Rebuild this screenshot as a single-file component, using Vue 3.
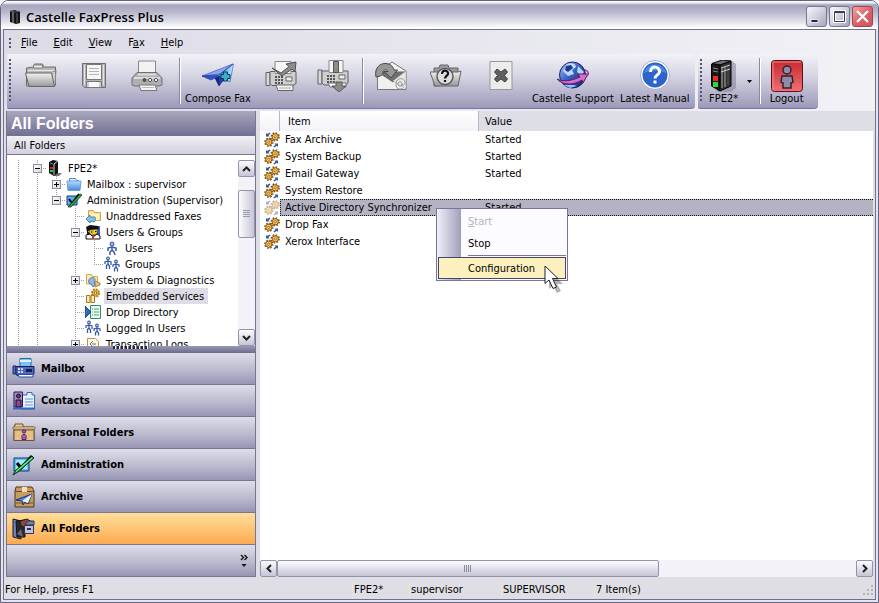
<script setup>
import { ref } from 'vue'

const menus = [
  { key: 'F', before: '', after: 'ile' },
  { key: 'E', before: '', after: 'dit' },
  { key: 'V', before: '', after: 'iew' },
  { key: 'a', before: 'F', after: 'x' },
  { key: 'H', before: '', after: 'elp' },
]

const toolGroups = [
  {
    size: 'wide',
    tools: [
      { icon: 't-open', name: 'Open' },
      { icon: 't-save', name: 'Save' },
      { icon: 't-print', name: 'Print' },
    ],
  },
  {
    size: 'narrow',
    tools: [
      { icon: 't-compose', label: 'Compose Fax' },
      { icon: 't-forward', name: 'Forward' },
      { icon: 't-receive', name: 'Receive' },
    ],
  },
  {
    size: 'wider',
    tools: [
      { icon: 't-mail', name: 'Send as mail' },
      { icon: 't-find', name: 'Find' },
      { icon: 't-delete', name: 'Delete' },
      { icon: 't-support', label: 'Castelle Support' },
      { icon: 't-manual', label: 'Latest Manual' },
    ],
  },
]

/* guides: v = vertical line, t = branch, l = last branch, n = nothing */
const tree = [
  { label: 'FPE2*', guides: 'vt', box: '-', icon: 's-server' },
  { label: 'Mailbox : supervisor', guides: 'vvt', box: '+', icon: 's-folder' },
  { label: 'Administration (Supervisor)', guides: 'vvl', box: '-', icon: 's-check' },
  { label: 'Unaddressed Faxes', guides: 'vvnt', icon: 's-unaddressed' },
  { label: 'Users & Groups', guides: 'vvnt', box: '-', icon: 's-face' },
  { label: 'Users', guides: 'vvnvt', icon: 's-user' },
  { label: 'Groups', guides: 'vvnvl', icon: 's-group' },
  { label: 'System & Diagnostics', guides: 'vvnt', box: '+', icon: 's-system' },
  { label: 'Embedded Services', guides: 'vvnt', icon: 's-services', active: true },
  { label: 'Drop Directory', guides: 'vvnt', icon: 's-drop' },
  { label: 'Logged In Users', guides: 'vvnt', icon: 's-group' },
  { label: 'Transaction Logs', guides: 'vvnt', box: '+', icon: 's-log' },
]

const navs = [
  { label: 'Mailbox', icon: 'n-mailbox' },
  { label: 'Contacts', icon: 'n-contacts' },
  { label: 'Personal Folders', icon: 'n-personal' },
  { label: 'Administration', icon: 'n-admin' },
  { label: 'Archive', icon: 'n-archive' },
  { label: 'All Folders', icon: 'n-all' },
]
const currentNav = ref('All Folders')

const services = [
  { item: 'Fax Archive', value: 'Started' },
  { item: 'System Backup', value: 'Started' },
  { item: 'Email Gateway', value: 'Started' },
  { item: 'System Restore', value: '' },
  { item: 'Active Directory Synchronizer', value: 'Started' },
  { item: 'Drop Fax', value: '' },
  { item: 'Xerox Interface', value: '' },
]
const currentService = ref('Active Directory Synchronizer')
</script>

<template>
  <div class="window">
    <svg class="sprites" width="0" height="0" aria-hidden="true">
      <defs>
        <linearGradient id="g-gray" x1="0" y1="0" x2="0" y2="1">
          <stop offset="0" stop-color="#f4f4f4" /><stop offset="1" stop-color="#989898" />
        </linearGradient>
        <linearGradient id="g-globe" x1="0" y1="0" x2="1" y2="1">
          <stop offset="0" stop-color="#a8d4ff" /><stop offset=".45" stop-color="#3a60c8" /><stop offset="1" stop-color="#101c60" />
        </linearGradient>
        <linearGradient id="g-red" x1="0" y1="0" x2="0" y2="1">
          <stop offset="0" stop-color="#c82830" /><stop offset="1" stop-color="#f07070" />
        </linearGradient>
        <linearGradient id="g-plane" x1="0" y1="0" x2="1" y2="0">
          <stop offset="0" stop-color="#3878e0" /><stop offset="1" stop-color="#c0f0ff" />
        </linearGradient>
        <linearGradient id="g-blue" x1="0" y1="0" x2="0" y2="1">
          <stop offset="0" stop-color="#b4dcff" /><stop offset="1" stop-color="#4888d8" />
        </linearGradient>
      </defs>

      <symbol id="t-open" viewBox="0 0 32 32">
        <path d="M1.500 26V8l7-1 1-3h8l1 3h12v18z" fill="#b8b8b8" stroke="#6c6c6c" />
        <path d="M8.500 8V5h9v3z" fill="#eee" stroke="#808080" />
        <path d="M3 10.500h27M29 12v12" stroke="#e8e8e8" />
        <path d="M0.500 13h26l3 13.500H4z" fill="url(#g-gray)" stroke="#666" />
        <path d="M28 12l3-2-1 14" fill="none" stroke="#888" />
      </symbol>
      <symbol id="t-save" viewBox="0 0 32 32">
        <path d="M4.500 3.500h23v24h-21l-2-2z" fill="#b4b4b4" stroke="#6e6e6e" />
        <path d="M6.500 5v20M25.500 5v20" stroke="#e4e4e4" />
        <path d="M8.500 4.500h15v15h-15z" fill="#f6f6f6" stroke="#777" />
        <path d="M11 8.500h10M11 11.500h10M11 14.500h10" stroke="#b4b4b4" />
        <path d="M8.500 21.500h15v6h-15z" fill="#d0d0d0" stroke="#777" /><path d="M11 22h10v5H11z" fill="#f8f8f8" />
      </symbol>
      <symbol id="t-print" viewBox="0 0 32 32">
        <path d="M7.500 1h17v15h-17z" fill="#f2f2f2" stroke="#888" />
        <path d="M6 12.500h20l5 5.500v7l-3 1H4l-3-1v-7z" fill="#b0b0b0" stroke="#707070" />
        <path d="M7 14.500h18M3 18h26" stroke="#dcdcdc" stroke-width="2" />
        <circle cx="13.500" cy="20" r="2" fill="#505050" /><circle cx="19" cy="20" r="1.700" fill="#eee" stroke="#555" /><circle cx="25" cy="20" r="1.700" fill="#eee" stroke="#555" />
        <path d="M8 25h16l2 5.500H10z" fill="#f4f4f4" stroke="#777" />
        <path d="M11 27.500h12" stroke="#bbb" />
      </symbol>
      <symbol id="t-compose" viewBox="0 0 32 32">
        <path d="M0 16L31 4 18 14z" fill="#88a8f4" stroke="#2848b0" stroke-width=".6" />
        <path d="M0 16l17-1L31 4 17 26l-4-8-4 2z" fill="#2c50d8" stroke="#203080" stroke-width=".6" />
        <path d="M31.500 4L28 22l-12-6z" fill="url(#g-plane)" stroke="#3058b0" stroke-width=".6" />
        <path d="M13 18l4-2v10z" fill="#182870" /><path d="M17 16l6 3-6 7z" fill="#203cb0" />
        <path d="M21.500 12h4v2.500H28v4h-2.500V21h-4v-2.500H19v-4h2.500z" fill="#38b0c8" stroke="#083858" />
      </symbol>
      <symbol id="t-forward" viewBox="0 0 32 32">
        <path d="M1 12.500h4v13H1z" fill="#d8d8d8" stroke="#606060" />
        <path d="M5 11.500h26v12l-3 2H7l-2-2z" fill="#cecece" stroke="#606060" />
        <path d="M10 1.500h16v12H10z" fill="#f6f6f6" stroke="#888" />
        <path d="M7 8l9 5 8-6.500-3-2.500 10-2-1 10-3-3-10 7z" fill="#8c8c8c" stroke="#505050" />
        <path d="M10 17h8M10 20h8M10 23h8" stroke="#555" stroke-width="2" stroke-dasharray="2 1" />
        <path d="M21 17h6v4h-6z" fill="#eee" stroke="#666" />
        <path d="M11 25h17v5.500H13z" fill="#f5f5f5" stroke="#666" /><path d="M14 28h12" stroke="#aaa" />
      </symbol>
      <symbol id="t-receive" viewBox="0 0 32 32">
        <path d="M1 10h4v14H1z" fill="#d8d8d8" stroke="#606060" />
        <path d="M5 11h26v12l-3 2H7l-2-2z" fill="#cecece" stroke="#606060" />
        <path d="M12 .500h14v12H12z" fill="#f6f6f6" stroke="#888" />
        <path d="M16.500 1.500h5v11h-5z" fill="#8c8c8c" stroke="#555" />
        <path d="M10 16h9M10 19h9M10 22h9" stroke="#555" stroke-width="2" stroke-dasharray="2 1" />
        <path d="M22 15h6v4h-6z" fill="#eee" stroke="#666" />
        <path d="M11 23h18v4H13z" fill="#f5f5f5" stroke="#777" />
        <path d="M19 22h6v4h4l-7 6-7-6h4z" fill="#8c8c8c" stroke="#555" />
      </symbol>
      <symbol id="t-mail" viewBox="0 0 32 32">
        <path d="M2.500 12L17 2l14 9v18.500H2.500z" fill="#f0f0f0" stroke="#777" />
        <path d="M3 12h28L18 22z" fill="#707070" stroke="#666" />
        <path d="M18 21L31 11v18z" fill="#e8e8e8" stroke="#aaa" stroke-width=".6" />
        <path d="M1 17C-1 8 5 3 11 3.500c5 .5 7 3 8 6.500h3.500L16 18l-7-6.500h4c-1.500-2.500-5-2-5 1 0 2-2 4-7 4.500z" fill="#979797" stroke="#484848" />
        <path d="M27 24c0 3-4 3-4 0s4-3 4 0 3 1 3-1c0-6-9-6-9 1s6 5 7 4" fill="none" stroke="#909090" />
      </symbol>
      <symbol id="t-find" viewBox="0 0 32 32">
        <path d="M4 26V8h5l1-3h8l1 3h9v17z" fill="#9a9a9a" stroke="#666" />
        <path d="M0 12h28l3-1-3 15H5z" fill="url(#g-gray)" stroke="#666" />
        <circle cx="15" cy="16.500" r="8" fill="#dedede" stroke="#5c5c5c" stroke-width="1.500" />
        <path d="M12 14c0-5 6.500-4 6 0-.5 2-3 2-3 4.500M15 20v2" fill="none" stroke="#111" stroke-width="2.200" />
      </symbol>
      <symbol id="t-delete" viewBox="0 0 32 32">
        <path d="M5 1.500h22v28H5z" fill="#ececec" stroke="#999" />
        <path d="M12 9l4 3 4-3 2.500 3-3 3.500 3 3.500L20 22l-4-3-4 3-2.500-3 3-3.500-3-3.500z" fill="#606060" stroke="#444" stroke-linejoin="round" />
      </symbol>
      <symbol id="t-support" viewBox="0 0 32 32">
        <circle cx="15.500" cy="15" r="13" fill="url(#g-globe)" stroke="#182460" />
        <path d="M10 4c5-2 9 0 9 3l-4 3 2 4-6 2-5-5zM21 6l6 6-3 4-4-4z" fill="#c4e4ff" opacity=".9" />
        <path d="M9 6l5-1 2 3-5 4-3-2z" fill="#203490" />
        <path d="M0 19c6 3 14 2 23-2l-2-3 10 0-5 9-1-3c-9 6-20 5-25-1z" fill="#d070d0" stroke="#601860" />
        <path d="M28 10c4 1 4 4 2 6" fill="none" stroke="#a03ca0" stroke-width="1.500" />
        <path d="M7 25l6 3 7-2-3-1z" fill="#90c0ff" />
      </symbol>
      <symbol id="t-manual" viewBox="0 0 32 32">
        <circle cx="16" cy="15" r="14.500" fill="#fff" stroke="#a8b0d0" />
        <circle cx="16" cy="15" r="12.500" fill="#2c64cc" /><path d="M4.500 13a12 12 0 0 1 23 0c-8-3-15-3-23 0z" fill="#4c88e0" />
        <path d="M11.500 12c0-7 9.500-6 9 0-.5 3-4.500 3-4.500 6.500M16 20.500v3" fill="none" stroke="#fff" stroke-width="3" />
      </symbol>
      <symbol id="t-server" viewBox="0 0 32 32">
        <path d="M7 3l17-2 4 3v24l-5 4H9z" fill="#88889a" opacity=".6" />
        <path d="M4 3.500L14 0l9 1-10 4z" fill="#707070" stroke="#111" />
        <path d="M3.500 4l8.500 1v26l-8.500-5z" fill="#181818" stroke="#000" />
        <path d="M12 5l11-4v25l-11 5z" fill="#303030" stroke="#000" />
        <path d="M14 8v20M17 7v20" stroke="#a8a8a8" /><path d="M20 5v20" stroke="#585858" /><path d="M13 8l9-3M13 12l9-3" stroke="#d0d0d0" />
        <path d="M5 8l5 1M5 11l5 1" stroke="#888" />
        <path d="M5 16h5v5H5z" fill="#f02820" /><path d="M5 22h5v5H5z" fill="#20e030" />
      </symbol>
      <symbol id="t-logout" viewBox="0 0 32 32">
        <rect x=".5" y=".5" width="31" height="31" rx="3" fill="url(#g-red)" stroke="#601018" />
        <path d="M2 30V2h28" fill="none" stroke="#f08888" />
        <circle cx="16" cy="10" r="4" fill="#8c8ca4" stroke="#30203a" stroke-width="1.500" />
        <path d="M11 16h10l1 6-2 1v5h-8v-5l-2-1z" fill="#8c8ca4" stroke="#30203a" stroke-width="1.500" />
      </symbol>

      <symbol id="s-server" viewBox="0 0 16 16">
        <path d="M9 13h6l-3 3H6z" fill="#777" /><path d="M2 2l4-2 5 1v12l-4 3-5-3z" fill="#111" />
        <path d="M7 4v11M7 4l4-3" stroke="#ccc" /><path d="M3 3l3 1" stroke="#888" />
        <path d="M3 7h3v2H3z" fill="#e02020" /><path d="M3 10h3v2H3z" fill="#20d040" />
      </symbol>
      <symbol id="s-folder" viewBox="0 0 16 16">
        <path d="M3.500 6V2.500h6l1 2h2V6" fill="#e0f0ff" stroke="#5088c8" />
        <path d="M1 5h14l-1 9.500H2z" fill="url(#g-blue)" stroke="#6ca0e0" />
      </symbol>
      <symbol id="s-check" viewBox="0 0 16 16">
        <path d="M1 4h10v9H1z" fill="#60b0f0" stroke="#103870" /><path d="M3 7l3 4 7-9" fill="none" stroke="#000" stroke-width="2" />
        <path d="M2 15L14 2l2 1L5 15z" fill="#28a848" stroke="#083818" stroke-width=".8" />
      </symbol>
      <symbol id="s-unaddressed" viewBox="0 0 16 16">
        <path d="M3.500 12V2.500h5l1 2h6v8z" fill="#ffe49c" stroke="#d0a040" /><path d="M4 6h11l-1 6H5z" fill="#fff0c0" />
        <path d="M1 11l4-4v2h5c1 2 0 4-1 5l-4-1v2z" fill="#88c0e0" stroke="#4888b0" />
      </symbol>
      <symbol id="s-face" viewBox="0 0 16 16">
        <path d="M5 2h10v13H5z" fill="#3060d8" /><path d="M1 3l4-2 8 1 1 3-9 1-3 2z" fill="#101010" />
        <path d="M4 6l8-1 1 3-2 3-6 0z" fill="#f4c820" stroke="#111" stroke-width=".6" />
        <path d="M1 15V11l4-1 3 3 4-3 3 2v3z" fill="#fff" stroke="#111" /><path d="M7 12h2v3H7z" fill="#e03020" /><path d="M6 8h1.500M10 7.500h1.500" stroke="#000" />
        <path d="M2 6l3 4-3 1z" fill="#111" />
      </symbol>
      <symbol id="s-user" viewBox="0 0 16 16">
        <circle cx="8" cy="4" r="2" fill="#a0c0f8" stroke="#304898" />
        <path d="M8 7v4M4 11V8l4-1 4 1v3M6 15v-3l2-2 2 2 1 3" fill="none" stroke="#3858a8" stroke-width="1.500" />
      </symbol>
      <symbol id="s-group" viewBox="0 0 16 16">
        <circle cx="4" cy="2.500" r="1.500" fill="#a0c0f8" stroke="#304898" />
        <path d="M4 5v4M1 8V6l3-1 3 1v3M2.500 13V9.500L4 8l1.500 2v3" fill="none" stroke="#3858a8" stroke-width="1.300" />
        <circle cx="12" cy="5.500" r="1.500" fill="#a0c0f8" stroke="#304898" />
        <path d="M12 8v4M9 11V9l3-1 3 1v2M10.500 15.500v-3L12 11l1.500 2v2.500" fill="none" stroke="#3858a8" stroke-width="1.300" />
      </symbol>
      <symbol id="s-system" viewBox="0 0 16 16">
        <path d="M1.500 12V2.500h5l1 2h5v8z" fill="#ffe8b0" stroke="#d0a858" />
        <path d="M10 9l5 2v2l-5 2z" fill="#f0c068" stroke="#b08030" />
        <path d="M6 6c4-2 5 2 3 4l1 3-2 2-2-3-2-1c-1-3 0-4 2-5z" fill="#90b8e0" stroke="#5080b0" />
      </symbol>
      <symbol id="s-services" viewBox="0 0 16 16">
        <circle cx="10.500" cy="5" r="3.600" fill="#f0c040" stroke="#a87018" stroke-width="1.800" stroke-dasharray="1.800 1" /><circle cx="10.500" cy="5" r="1.300" fill="#fff" stroke="#905c10" />
        <path d="M1.500 7.500h3.500v7H1.500zM6 7.500h3.500v7H6z" fill="#ffeaa8" stroke="#a07828" />
      </symbol>
      <symbol id="s-drop" viewBox="0 0 16 16">
        <path d="M5.500 1.500h10v13h-10z" fill="#e8fff0" stroke="#388878" /><path d="M7 5h1M9 5h5M7 8h1M9 8h5M7 11h1M9 11h5" stroke="#50a070" />
        <path d="M0 2l6 6-6 6z" fill="#2c70b8" stroke="#184878" />
      </symbol>
      <symbol id="s-log" viewBox="0 0 16 16">
        <path d="M2.500 2.500h8l3 3v10h-11z" fill="#fff8e0" stroke="#b89850" /><path d="M8 5l-3 3 3 3M7 8h4M7 12h4" fill="none" stroke="#5878a8" />
      </symbol>

      <symbol id="s-gears" viewBox="0 0 16 16">
        <g stroke="#8c5410">
          <circle cx="11.200" cy="4.800" r="3.900" fill="none" stroke-width="1.600" stroke-dasharray="1.600 1.460" />
          <circle cx="11.200" cy="4.800" r="3.100" fill="#f8cc60" /><circle cx="11.200" cy="4.800" r="1.100" fill="#fff" stroke-width=".8" />
          <circle cx="4.800" cy="10.200" r="3.900" fill="none" stroke-width="1.600" stroke-dasharray="1.600 1.460" />
          <circle cx="4.800" cy="10.200" r="3.100" fill="#f8cc60" /><circle cx="4.800" cy="10.200" r="1.100" fill="#fff" stroke-width=".8" />
        </g>
        <path d="M2 1v3.500h3.500L4.500 3.300 6.500 1.500 5.500.5 3.200 2zM14 15v-3.500h-3.500l1 1.200-2 1.800 1 1 2.300-1.700z" fill="#2c5c98" />
      </symbol>

      <symbol id="n-mailbox" viewBox="0 0 24 24">
        <path d="M8 1.500h11v9H8z" fill="#80c4f0" stroke="#2868a0" /><path d="M8 4h11" stroke="#d8f4ff" stroke-width="2" />
        <path d="M1 9h3v8H1z" fill="#5070c0" stroke="#182870" /><path d="M4 9.500h18v7l-2 2H5l-1-2z" fill="#5068b8" stroke="#141c60" />
        <path d="M6 12h6M6 15h6" stroke="#c8d8ff" stroke-width="2" stroke-dasharray="2 1" /><path d="M14 12h6v3h-6z" fill="#141c58" />
        <path d="M6 17.500h15v2.500H7z" fill="#f4f8ff" stroke="#3048a0" />
      </symbol>
      <symbol id="n-contacts" viewBox="0 0 24 24">
        <path d="M9 6h6V3.500h5V6h2.500v14H9z" fill="#e8f2ff" stroke="#3868c0" /><path d="M13 10h8M13 13h8M13 16h8" stroke="#6890d0" />
        <path d="M2 3h8.500v15H2z" fill="#a890b8" stroke="#281c58" /><circle cx="6.500" cy="7" r="2" fill="#703878" stroke="#180c30" />
        <path d="M4 18v-7h5v7z" fill="#8c4890" stroke="#180c30" /><path d="M1 18.500h22v2H1z" fill="#3868c0" />
      </symbol>
      <symbol id="n-personal" viewBox="0 0 24 24">
        <path d="M2 19.500V5h1V3h8v3h11v13.500z" fill="#f0d090" stroke="#70503c" /><path d="M1 6h22v2H1z" fill="#f8e4b8" stroke="#805838" stroke-width=".8" />
        <path d="M2 9h20v10.500H2z" fill="#e4c088" stroke="#70503c" />
        <circle cx="12" cy="10.500" r="1.700" fill="#a860b8" stroke="#502858" /><path d="M10 18.500v-4l1-1h2l1 1v4z" fill="#a860b8" stroke="#502858" />
      </symbol>
      <symbol id="n-admin" viewBox="0 0 24 24">
        <path d="M2 5h15v13H2z" fill="#60c0f0" stroke="#103870" /><path d="M4 7h11v9H4z" fill="#a8e4ff" />
        <path d="M5 10l4 5 11-12" fill="none" stroke="#000" stroke-width="3" />
        <path d="M1 22l2-4L20 3l2 2L6 19z" fill="#28b050" stroke="#083818" /><path d="M4 18.500L20 5" stroke="#90f0a0" />
      </symbol>
      <symbol id="n-archive" viewBox="0 0 24 24">
        <path d="M4 2h16l2 4v16H3V6z" fill="#c89c60" stroke="#4c3418" /><path d="M3 6.500h19" stroke="#6c4c24" /><path d="M10 2h5v5h-5z" fill="#f4e0b0" />
        <path d="M4 18h17" stroke="#a07840" stroke-width="2" />
        <path d="M4 15l16-6-4 10-3-2-2 3-1-4z" fill="#5888e0" stroke="#183070" /><path d="M10 16l10-7-4 9z" fill="#e8f4ff" />
      </symbol>
      <symbol id="n-all" viewBox="0 0 24 24">
        <path d="M1 2l8 2v18l-8-2z" fill="#7080b0" stroke="#181828" /><path d="M4 4l9-1v17H5z" fill="#282830" stroke="#101018" />
        <path d="M8 4l7-2 5 3-4 6-7-2z" fill="#884838" stroke="#301810" /><path d="M13 8l3-4h6v4z" fill="#7080a8" stroke="#303050" />
        <path d="M12.500 8.500h9v8h-9z" fill="#c0c4e0" stroke="#303058" /><path d="M15 12h4" stroke="#303058" stroke-width="2" /><path d="M5 17l4-5 2 8z" fill="#686868" />
      </symbol>
    </svg>

    <header class="titlebar">
      <svg class="app-icon" viewBox="0 0 12 16" aria-hidden="true">
        <path d="M1 2l5-1 5 2v11l-4 1-6-2z" fill="#141414" /><path d="M4 3v11" stroke="#b0b0b0" /><path d="M8 4v10" stroke="#666" /><path d="M1 2l5 1 5-1" stroke="#555" fill="none" />
      </svg>
      <h1>Castelle FaxPress Plus</h1>
      <div class="caption-buttons">
        <button type="button" aria-label="Minimize"><svg viewBox="0 0 19 19"><path d="M4 12.500h7v3H4z" fill="#26263c" stroke="#fff" stroke-width=".8" /></svg></button>
        <button type="button" aria-label="Maximize"><svg viewBox="0 0 19 19"><path d="M4.500 4.500h10v10h-10z" fill="none" stroke="#fff" stroke-width="3" /><path d="M4.500 4.500h10v10h-10zM4 5.500h11" fill="none" stroke="#3a3a54" /></svg></button>
        <button type="button" class="close" aria-label="Close"><svg viewBox="0 0 19 19"><path d="M4 4l11 11M15 4L4 15" stroke="#fff" stroke-width="2.400" /></svg></button>
      </div>
    </header>

    <div class="client">
      <nav class="menubar" aria-label="Menu">
        <span class="grip short"></span>
        <button v-for="m in menus" :key="m.key" type="button">{{ m.before }}<u>{{ m.key }}</u>{{ m.after }}</button>
      </nav>

      <div class="toolbars">
        <div class="toolbar" role="toolbar" aria-label="Standard">
          <span class="grip"></span>
          <div v-for="g in toolGroups" :key="g.size" class="tool-group" :class="g.size">
            <button v-for="t in g.tools" :key="t.icon" type="button" class="tool" :aria-label="t.label || t.name">
              <svg><use :href="'#' + t.icon" /></svg>
              <span>{{ t.label }}</span>
            </button>
          </div>
        </div>
        <div class="toolbar" role="toolbar" aria-label="Server">
          <span class="grip"></span>
          <div class="tool-group server">
            <button type="button" class="tool"><svg><use href="#t-server" /></svg><span>FPE2*</span></button>
            <button type="button" class="drop" aria-label="Choose server"><svg viewBox="0 0 5 3"><path d="M0 0h5L2.500 3z" /></svg></button>
          </div>
          <div class="tool-group narrow">
            <button type="button" class="tool"><svg><use href="#t-logout" /></svg><span>Logout</span></button>
          </div>
        </div>
      </div>

      <div class="workspace">
        <aside class="sidebar">
          <h2>All Folders</h2>
          <h3>All Folders</h3>
          <div class="tree-pane">
            <ul class="tree">
              <li v-for="n in tree" :key="n.label">
                <span v-for="(g, i) in n.guides" :key="i" class="guide" :class="g">
                  <button v-if="n.box && i === n.guides.length - 1" type="button" class="expander" :aria-label="'Toggle ' + n.label">
                    <svg viewBox="0 0 7 7"><path :d="n.box === '+' ? 'M1 3.500h5M3.500 1v5' : 'M1 3.500h5'" stroke="#000" /></svg>
                  </button>
                </span>
                <svg class="node-icon"><use :href="'#' + n.icon" /></svg>
                <span class="node-label" :class="{ active: n.active }">{{ n.label }}</span>
              </li>
            </ul>
            <div class="scrollbar vertical">
              <button type="button" aria-label="Scroll up"><svg viewBox="0 0 9 6"><path d="M1 5l3.500-3.500L8 5" /></svg></button>
              <div class="track"><div class="thumb"><i></i></div></div>
              <button type="button" aria-label="Scroll down"><svg viewBox="0 0 9 6"><path d="M1 1l3.500 3.500L8 1" /></svg></button>
            </div>
          </div>
          <div class="splitter"><i></i></div>
          <nav class="sections" aria-label="Sections">
            <button v-for="n in navs" :key="n.label" type="button" :class="{ current: n.label === currentNav }" @click="currentNav = n.label">
              <svg><use :href="'#' + n.icon" /></svg>{{ n.label }}
            </button>
            <div class="overflow">
              <button type="button" aria-label="More sections">
                <svg viewBox="0 0 8 14"><path d="M1 1l2.500 2.500L1 6M4.500 1L7 3.500 4.500 6" fill="none" stroke="#111" stroke-width="1.400" /><path d="M1.500 10h5L4 13z" fill="#111" /></svg>
              </button>
            </div>
          </nav>
        </aside>

        <main class="content">
          <table>
            <colgroup><col class="c-icon" /><col class="c-item" /><col /></colgroup>
            <thead>
              <tr><th aria-label="Icon"></th><th>Item</th><th>Value</th></tr>
            </thead>
            <tbody>
              <tr v-for="s in services" :key="s.item" :class="{ selected: s.item === currentService }" @click="currentService = s.item">
                <td><svg><use href="#s-gears" /></svg></td>
                <td>{{ s.item }}</td>
                <td>{{ s.value }}</td>
              </tr>
            </tbody>
          </table>
          <div class="scrollbar horizontal">
            <button type="button" aria-label="Scroll left"><svg viewBox="0 0 6 9"><path d="M5 1L1.500 4.500 5 8" /></svg></button>
            <div class="track"><div class="thumb"><i></i></div></div>
            <button type="button" aria-label="Scroll right"><svg viewBox="0 0 6 9"><path d="M1 1l3.500 3.500L1 8" /></svg></button>
          </div>

          <div class="context-menu" role="menu">
            <button type="button" role="menuitem" disabled><u>S</u>tart</button>
            <button type="button" role="menuitem">Stop</button>
            <hr />
            <button type="button" role="menuitem" class="hover">Configuration</button>
          </div>
          <svg class="pointer" viewBox="0 0 22 32" aria-hidden="true">
            <path d="M5 5v19l4-3 4 7 4-2-4-7h6z" fill="#000" opacity=".3" />
            <path d="M1 1v17.500l4-3.500 4 8.500 3.500-1.500-4-8.500h5.500z" fill="#fff" stroke="#222" />
          </svg>
        </main>
      </div>

      <footer class="statusbar">
        <span>For Help, press F1</span><span>FPE2*</span><span>supervisor</span><span>SUPERVISOR</span><span>7 Item(s)</span>
        <svg viewBox="0 0 12 12" aria-hidden="true"><path d="M9 1h2v2H9zM5 5h2v2H5zM9 5h2v2H9zM1 9h2v2H1zM5 9h2v2H5zM9 9h2v2H9z" fill="#b4b3bc" /></svg>
      </footer>
    </div>
  </div>
</template>

<style>
body {
  margin: 0;
  background: #fff;
}
</style>

<style scoped>
* {
  box-sizing: border-box;
}
button {
  padding: 0;
  border: 0;
  background: none;
  color: inherit;
  font: inherit;
}
svg {
  display: block;
}
.sprites {
  position: absolute;
}
.window {
  display: flex;
  flex-direction: column;
  height: 100vh;
  padding: 0 2px 2px;
  border: 1px solid #66657f;
  border-radius: 8px 8px 0 0;
  background: #e4e4ee;
  color: #000;
  font: 11px/14px "DejaVu Sans Condensed", "Noto Sans", sans-serif;
  overflow: hidden;
}
.titlebar {
  display: flex;
  align-items: center;
  height: 28px;
  flex: none;
  margin: 0 -2px;
  padding: 3px 5px 0 8px;
  background: linear-gradient(#fff, #e8e8f0 2px, #a5a4bd 4px, #b5b4c9 10px, #dddde8 20px, #fff 27px);
}
.app-icon {
  width: 12px;
  height: 16px;
}
.titlebar h1 {
  flex: 1;
  margin: 0 0 0 5px;
  font: 600 13px/18px "Open Sans", sans-serif;
}
.caption-buttons {
  display: flex;
  gap: 2px;
}
.caption-buttons button {
  width: 21px;
  height: 21px;
  border: 1px solid #77768f;
  border-radius: 3px;
  background: linear-gradient(135deg, #f8f8fc, #c8c7d8 60%, #a4a3be);
}
.caption-buttons .close {
  border-color: #a04450;
  background: linear-gradient(135deg, #f0a8a8, #dc6468 50%, #cc5458);
}
.client {
  display: flex;
  flex-direction: column;
  flex: 1;
  min-height: 0;
  border: 1px solid #72718c;
  background: linear-gradient(90deg, #dcdbe6, #f1f1f6);
}
.menubar {
  display: flex;
  align-items: center;
  height: 24px;
  flex: none;
  padding: 2px 0 0 5px;
}
.menubar button {
  margin-left: 16px;
}
.menubar .grip + button {
  margin-left: 10px;
}
.grip {
  width: 2px;
  height: 44px;
  flex: none;
  background: repeating-linear-gradient(#55546e 0 2px, transparent 2px 4px);
}
.grip.short {
  height: 10px;
}
.toolbars {
  display: flex;
  gap: 3px;
  flex: none;
  padding: 0 3px 2px;
}
.toolbar {
  display: flex;
  align-items: center;
  height: 55px;
  padding: 0 2px;
  border-bottom: 1px solid #77759a;
  border-radius: 2px 4px 4px 2px;
  background: linear-gradient(#f2f2f8, #d6d5e3 40%, #9b99b9);
}
.tool-group {
  display: flex;
  padding: 0 4px 0 3px;
}
.tool-group.wide {
  padding: 0 6px 0 3px;
}
.tool-group.wider {
  padding: 0 0 0 2px;
}
.tool-group + .tool-group {
  background: linear-gradient(90deg, #8a89a4 0 1px, #fff 1px 2px) 0 2px / 2px 46px no-repeat;
}
.tool {
  display: flex;
  flex-direction: column;
  align-items: center;
  height: 50px;
  padding: 4px 3px 0;
}
.tool svg {
  width: 32px;
  height: 32px;
}
.tool span {
  height: 14px;
  white-space: nowrap;
}
.wide .tool {
  min-width: 53px;
}
.narrow {
  gap: 2px;
}
.narrow .tool {
  min-width: 50px;
}
.wider .tool {
  min-width: 55px;
}
.server {
  gap: 4px;
}
.drop svg {
  width: 5px;
  height: 3px;
}
.drop {
  width: 8px;
}
.workspace {
  display: flex;
  flex: 1;
  gap: 4px;
  min-height: 0;
  padding: 0 2px;
  background: #dedee6;
}
.sidebar {
  display: flex;
  flex-direction: column;
  width: 250px;
  flex: none;
  border: solid #77758f;
  border-width: 0 1px;
  background: #fff;
}
.sidebar h2 {
  height: 25px;
  flex: none;
  margin: 0;
  padding-left: 4px;
  background: linear-gradient(#a8a7bd, #716f92);
  color: #fff;
  font: bold 16px/25px "Liberation Sans", sans-serif;
}
.sidebar h3 {
  height: 19px;
  flex: none;
  margin: 0;
  padding-left: 7px;
  border-bottom: 1px solid #77758f;
  background: linear-gradient(#f0f0f5, #d2d1de);
  font-size: 11px;
  font-weight: normal;
  line-height: 20px;
}
.tree-pane {
  display: flex;
  flex: 1;
  min-height: 0;
  padding-top: 5px;
}
.tree {
  flex: 1;
  min-width: 0;
  margin: 0;
  padding: 0 0 0 2px;
  overflow: hidden;
  list-style: none;
}
.tree li {
  display: flex;
  align-items: center;
  height: 16px;
}
.guide {
  display: flex;
  align-items: center;
  width: 19px;
  height: 16px;
  flex: none;
  padding-left: 5px;
}
.guide.v {
  background: repeating-linear-gradient(#a0a0a0 0 1px, transparent 1px 2px) 9px 0 / 1px 16px no-repeat;
}
.guide.t {
  background:
    repeating-linear-gradient(#a0a0a0 0 1px, transparent 1px 2px) 9px 0 / 1px 16px no-repeat,
    repeating-linear-gradient(90deg, #a0a0a0 0 1px, transparent 1px 2px) 9px 8px / 10px 1px no-repeat;
}
.guide.l {
  background:
    repeating-linear-gradient(#a0a0a0 0 1px, transparent 1px 2px) 9px 0 / 1px 9px no-repeat,
    repeating-linear-gradient(90deg, #a0a0a0 0 1px, transparent 1px 2px) 9px 8px / 10px 1px no-repeat;
}
.expander {
  width: 9px;
  height: 9px;
  border: 1px solid #8c8ca0;
  background: linear-gradient(135deg, #fff, #d8d8e0);
}
.node-icon {
  width: 16px;
  height: 16px;
  flex: none;
}
.node-label {
  margin-left: 3px;
  padding: 1px 4px 0 2px;
  line-height: 15px;
  white-space: nowrap;
}
.node-label.active {
  background: #dedde5;
}
.scrollbar {
  display: flex;
  flex: none;
  background: #f2f2f8;
}
.scrollbar button,
.thumb {
  display: flex;
  align-items: center;
  justify-content: center;
  flex: none;
  border: 1px solid #9493ac;
  border-radius: 2px;
  background: linear-gradient(#fcfcff, #c6c5d6);
}
.scrollbar button {
  width: 17px;
  height: 17px;
}
.scrollbar button path {
  fill: none;
  stroke: #222;
  stroke-width: 2;
}
.vertical {
  flex-direction: column;
  width: 17px;
}
.vertical button svg {
  width: 9px;
  height: 6px;
}
.horizontal button svg {
  width: 6px;
  height: 9px;
}
.track {
  flex: 1;
  min-width: 0;
}
.vertical .thumb {
  height: 48px;
  margin-top: 13px;
  background: linear-gradient(90deg, #fcfcff, #c6c5d6);
}
.vertical .thumb i {
  width: 7px;
  height: 8px;
  background: repeating-linear-gradient(#9a99ae 0 1px, transparent 1px 2px);
}
.horizontal .thumb {
  width: 66%;
  height: 17px;
}
.horizontal .thumb i {
  width: 8px;
  height: 7px;
  background: repeating-linear-gradient(90deg, #8a899e 0 1px, transparent 1px 2px);
}
.splitter {
  display: flex;
  align-items: flex-start;
  justify-content: center;
  height: 7px;
  flex: none;
  background: linear-gradient(#9a99b4, #6c6a8c);
}
.splitter i {
  width: 36px;
  height: 3px;
  background: repeating-linear-gradient(90deg, #26253a 0 2px, #fff 2px 3px, #7a7998 3px 4px);
}
.sections {
  flex: none;
  font-weight: bold;
}
.sections > * {
  display: flex;
  align-items: center;
  gap: 5px;
  width: 100%;
  height: 32px;
  padding: 0 5px;
  border-bottom: 1px solid #77758f;
  background: linear-gradient(#dedde9, #bfbed1 50%, #9896b4);
}
.sections > .current {
  background: linear-gradient(#ffdf9b, #fdaa50);
}
.sections svg {
  width: 24px;
  height: 24px;
}
.sections .overflow {
  justify-content: flex-end;
}
.overflow svg {
  width: 12px;
  height: 14px;
}
.content {
  position: relative;
  display: flex;
  flex-direction: column;
  justify-content: space-between;
  flex: 1;
  min-width: 0;
  background: #fff;
}
table {
  width: 100%;
  border-spacing: 0;
  table-layout: fixed;
}
.c-icon {
  width: 20px;
}
.c-item {
  width: 199px;
}
th {
  height: 20px;
  padding: 2px 8px 0;
  border-right: 1px solid #b8b7c6;
  background: linear-gradient(#fff, #f2f2f8);
  font-weight: normal;
  text-align: left;
}
th:last-child {
  padding-left: 6px;
  border-right: 0;
  background: #dedee6;
}
td {
  height: 17px;
  padding: 1px 5px 0;
  border: solid transparent;
  border-width: 1px 0;
  line-height: 14px;
  white-space: nowrap;
}
td:first-child {
  padding: 0 0 0 4px;
  border: 0;
}
td:last-child {
  padding-left: 6px;
}
td svg {
  width: 16px;
  height: 16px;
}
.selected td + td {
  border-color: #111;
  border-style: dotted;
  background: #b4b3c3;
}
.selected td:nth-child(2) {
  border-left-width: 1px;
  padding-left: 4px;
}
.selected svg {
  opacity: 0.45;
}
.context-menu {
  position: absolute;
  top: 97px;
  left: 176px;
  width: 132px;
  padding: 1px;
  border: 1px solid #77759a;
  background: linear-gradient(90deg, #f0f0f8, #a09fbc 24px, #fcfbff 24px);
}
.context-menu button {
  display: block;
  width: 100%;
  height: 22px;
  padding: 2px 0 0 30px;
  text-align: left;
}
.context-menu button:disabled {
  color: #b4b3bc;
}
.context-menu hr {
  height: 1px;
  margin: 1px 0 1px 30px;
  border: 0;
  background: #77759a;
}
.context-menu .hover {
  border: 1px solid #45446c;
  padding-left: 29px;
  background: #fdf0bf;
}
.pointer {
  position: absolute;
  top: 154px;
  left: 284px;
  width: 22px;
  height: 32px;
}
.statusbar {
  display: grid;
  grid-template-columns: 347px 57px 92px 93px 1fr 12px;
  align-items: center;
  height: 22px;
  flex: none;
  padding: 4px 1px 0;
  background: #dedee4;
}
.statusbar span {
  line-height: 18px;
}
.statusbar span + span {
  border-left: 1px solid #e8e6da;
  padding-left: 1px;
}
.statusbar svg {
  width: 12px;
  height: 12px;
}
</style>
